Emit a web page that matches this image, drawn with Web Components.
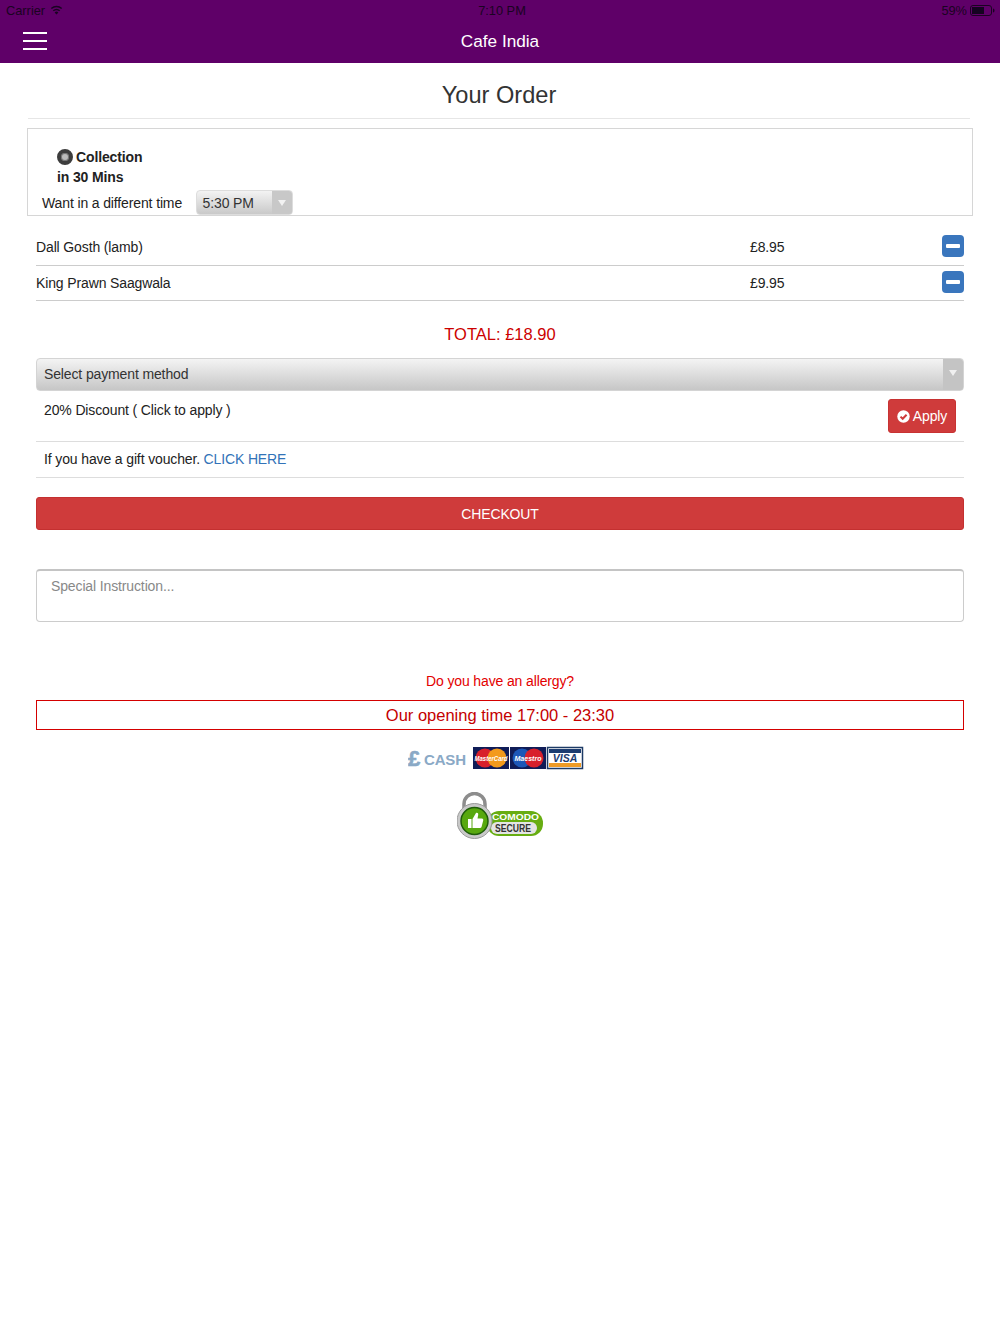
<!DOCTYPE html>
<html lang="en">
<head>
<meta charset="utf-8">
<title>Cafe India</title>
<style>
    html, body { margin: 0; background: #fff; }
    body { font-family: "Liberation Sans", Arial, sans-serif; font-size: 14px; letter-spacing: -.13px; color: #222; height: 1334px; overflow: hidden; }
    main { display: block; padding: 0 36px; }
</style>
</head>
<body>
<app-header title="Cafe India"></app-header>
<order-heading>Your Order</order-heading>
<order-type time="5:30 PM"></order-type>
<main>
    <order-line name="Dall Gosth (lamb)" price="£8.95"></order-line>
    <order-line name="King Prawn Saagwala" price="£9.95"></order-line>
    <order-total>TOTAL: £18.90</order-total>
    <payment-select>Select payment method</payment-select>
    <discount-row>20% Discount ( Click to apply )</discount-row>
    <voucher-row></voucher-row>
    <checkout-button>CHECKOUT</checkout-button>
    <special-note placeholder="Special Instruction..."></special-note>
    <allergy-link>Do you have an allergy?</allergy-link>
    <opening-time>Our opening time 17:00 - 23:30</opening-time>
    <pay-logos></pay-logos>
    <comodo-badge></comodo-badge>
</main>

<script>
// small helper so each class isn't the same 3 lines of shadow setup
class Base extends HTMLElement {
    constructor() {
        super();
        this.attachShadow({ mode: 'open' });
        this.shadowRoot.innerHTML = this.render();
    }
    render() { return ''; }
}

class AppHeader extends Base {
    render() {
        return `
        <style>
            :host { display: block; background: #5f0068; height: 63px; color: #fff; letter-spacing: 0; }
            .status { height: 20px; display: grid; grid-template-columns: 1fr auto 1fr; align-items: center; padding: 0 5px 0 6px; font-size: 12.8px; color: #1a0322; }
            .left { display: flex; align-items: center; gap: 5px; }
            .right { display: flex; align-items: center; justify-content: flex-end; gap: 3px; }
            .mid { margin-left: 3px; }
            .nav { height: 43px; display: grid; grid-template-columns: 1fr auto 1fr; align-items: center; padding: 0 23px; box-sizing: border-box; }
            .burger { display: flex; flex-direction: column; gap: 6px; width: 24px; margin-top: -2px; }
            .burger i { display: block; height: 2px; background: #fff; }
            .title { font-size: 17.2px; }
        </style>
        <div class="status">
            <div class="left">Carrier
                <svg width="13" height="10" viewBox="0 0 13 10"><path d="M6.5 9.6 4.6 7.4a2.8 2.8 0 0 1 3.8 0z" fill="#1a0322"/><path d="M3.3 5.800a4.900 4.900 0 0 1 6.400 0M1.300 3.500a8 8 0 0 1 10.400 0" fill="none" stroke="#1a0322" stroke-width="1.500"/></svg>
            </div>
            <div class="mid">7:10 PM</div>
            <div class="right">59%
                <svg width="25" height="11" viewBox="0 0 25 11"><rect x=".5" y=".5" width="21" height="10" rx="2.500" fill="none" stroke="#1a0322"/><rect x="2" y="2" width="12" height="7" fill="#150320"/><path d="M23 3.500c1 .3 1.500 1 1.500 2s-.5 1.700-1.500 2z" fill="#1a0322"/></svg>
            </div>
        </div>
        <div class="nav">
            <div class="burger"><i></i><i></i><i></i></div>
            <div class="title">${this.getAttribute('title')}</div>
        </div>`;
    }
}

class OrderHeading extends Base {
    render() {
        return `
        <style>
            :host { display: block; margin: 0 30px 9px 28px; height: 56px; box-sizing: border-box; border-bottom: 1px solid #e6e6e6; padding-top: 18px; text-align: center; font-size: 23.6px; letter-spacing: 0; line-height: 28px; color: #333; }
        </style>
        <slot></slot>`;
    }
}

class OrderType extends Base {
    render() {
        return `
        <style>
            :host { display: block; margin: 0 27px 14px; height: 88px; box-sizing: border-box; border: 1px solid #d6d6d6; padding: 18px 14px 0; color: #222; }
            .pick { padding-left: 15px; font-weight: bold; line-height: 20px; }
            .radio { display: flex; align-items: center; gap: 3px; }
            .dot { width: 16px; height: 16px; border-radius: 50%; box-sizing: border-box; border: 4px solid #3d3d3d; background: #bbb; box-shadow: inset 0 0 0 1px #777; }
            .want { display: flex; align-items: center; gap: 13.5px; margin-top: 3px; height: 25px; }
            .select { width: 97px; height: 25px; box-sizing: border-box; border: 1px solid #ddd; border-radius: 4px; background: linear-gradient(#f3f3f3, #c9c9c9); display: flex; align-items: center; padding-left: 6px; position: relative; color: #333; }
            .arrow { position: absolute; right: 0; top: 0; bottom: 0; width: 20px; background: #c8c8c8; border-radius: 0 3px 3px 0; display: flex; align-items: center; justify-content: center; }
            .arrow::after { content: ""; border: 4px solid transparent; border-top: 6px solid #f2f2f2; margin-top: 5px; }
        </style>
        <div class="pick">
            <div class="radio"><span class="dot"></span>Collection</div>
            <div>in 30 Mins</div>
        </div>
        <div class="want">
            <span>Want in a different time</span>
            <div class="select">${this.getAttribute('time')}<span class="arrow"></span></div>
        </div>`;
    }
}

class OrderLine extends Base {
    render() {
        return `
        <style>
            :host { display: grid; grid-template-columns: 1fr 214px; height: 35.5px; box-sizing: border-box; border-bottom: 1px solid #ccc; align-items: center; color: #222; }
            .btn { width: 22px; height: 22px; margin-top: -2px; border-radius: 4px; background: #3a76bd; display: flex; align-items: center; justify-content: center; }
            .btn i { display: block; width: 14px; height: 4px; background: #fff; border-radius: 1px; }
            .wrap { display: flex; justify-content: space-between; align-items: center; }
        </style>
        <span>${this.getAttribute('name')}</span>
        <div class="wrap"><span>${this.getAttribute('price')}</span><span class="btn"><i></i></span></div>`;
    }
}

class OrderTotal extends Base {
    render() {
        return `
        <style>
            :host { display: block; margin-top: 22px; height: 35px; line-height: 22px; text-align: center; font-size: 16.5px; letter-spacing: 0; color: #cc0000; }
        </style>
        <slot></slot>`;
    }
}

class PaymentSelect extends Base {
    render() {
        return `
        <style>
            :host { display: flex; align-items: center; height: 33px; box-sizing: border-box; border: 1px solid #d4d4d4; border-radius: 4px; padding: 0 0 2px 7px; background: linear-gradient(#f4f4f4, #c6c6c6); position: relative; color: #333; }
            .arrow { position: absolute; right: 0; top: 0; bottom: 0; width: 20px; background: #c4c4c4; border-radius: 0 3px 3px 0; display: flex; justify-content: center; align-items: center; }
            .arrow::after { content: ""; border: 4px solid transparent; border-top: 6px solid #f0f0f0; margin-top: 0; }
        </style>
        <slot></slot><span class="arrow"></span>`;
    }
}

class DiscountRow extends Base {
    render() {
        return `
        <style>
            :host { display: flex; justify-content: space-between; align-items: flex-start; height: 51px; box-sizing: border-box; border-bottom: 1px solid #ddd; padding: 8px 8px 0; color: #222; line-height: 20px; }
            button { all: unset; display: flex; align-items: center; gap: 3px; box-sizing: border-box; height: 34px; width: 68px; justify-content: center; background: #cf3b3b; border: 1px solid #c83232; border-radius: 3px; color: #fff; font: inherit; font-size: 14px; }
            .label { margin-top: 1px; }
        </style>
        <span class="label"><slot></slot></span>
        <button><svg width="13" height="13" viewBox="0 0 13 13"><circle cx="6.500" cy="6.500" r="6.200" fill="#fff"/><path d="M3.500 6.600 5.700 8.800 9.600 4.800" fill="none" stroke="#cf3b3b" stroke-width="2"/></svg>Apply</button>`;
    }
}

class VoucherRow extends Base {
    render() {
        return `
        <style>
            :host { display: flex; align-items: center; height: 36px; box-sizing: border-box; border-bottom: 1px solid #ddd; padding: 0 0 1px 8px; color: #222; }
            a { color: #3273b8; text-decoration: none; margin-left: 3.5px; }
        </style>
        If you have a gift voucher. <a href="#">CLICK HERE</a>`;
    }
}

class CheckoutButton extends Base {
    render() {
        return `
        <style>
            :host { display: flex; align-items: center; justify-content: center; margin-top: 19px; height: 33px; box-sizing: border-box; border: 1px solid #c43030; border-radius: 3px; background: #cf3b3b; color: #fff; }
        </style>
        <slot></slot>`;
    }
}

class SpecialNote extends Base {
    render() {
        return `
        <style>
            :host { display: block; margin-top: 39px; height: 53px; box-sizing: border-box; border: 1px solid #ccc; border-top: 2px solid #c4c4c4; border-radius: 4px; padding: 6px 14px; color: #888; line-height: 18px; }
        </style>
        ${this.getAttribute('placeholder')}`;
    }
}

class AllergyLink extends Base {
    render() {
        return `
        <style>
            :host { display: block; margin-top: 49px; height: 29px; line-height: 20px; text-align: center; color: #e30000; }
        </style>
        <slot></slot>`;
    }
}

class OpeningTime extends Base {
    render() {
        return `
        <style>
            :host { display: flex; align-items: center; justify-content: center; height: 30px; box-sizing: border-box; border: 1px solid #d40000; font-size: 16.5px; letter-spacing: 0; color: #c40000; }
        </style>
        <slot></slot>`;
    }
}

class PayLogos extends Base {
    render() {
        return `
        <style>
            :host { display: flex; justify-content: center; margin-top: 16px; height: 25px; letter-spacing: 0; }
            svg { display: block; margin-left: -7px; }
            text { font-family: "Liberation Sans", sans-serif; }
        </style>
        <svg width="178" height="25" viewBox="0 0 178 25">
            <text x="0" y="20" font-size="22" font-weight="bold" fill="#8aa9c6" stroke="#8aa9c6" stroke-width=".6">£</text>
            <text x="16" y="19" font-size="15" font-weight="bold" fill="#8aa9c6" textLength="42">CASH</text>
            <g>
                <rect x="65" y="1" width="36" height="22" fill="#101c57"/>
                <circle cx="77" cy="12" r="9.500" fill="#d8202c"/>
                <circle cx="89" cy="12" r="9.500" fill="#f39a1c"/>
                <text x="83" y="14.500" font-size="7" font-weight="bold" font-style="italic" fill="#fff" text-anchor="middle" textLength="33" lengthAdjust="spacingAndGlyphs">MasterCard</text>
            </g>
            <g>
                <rect x="102" y="1" width="36" height="22" fill="#101c57"/>
                <circle cx="114" cy="12" r="9.500" fill="#1c57b8"/>
                <circle cx="126" cy="12" r="9.500" fill="#d8202c"/>
                <text x="120" y="14.500" font-size="7" font-weight="bold" font-style="italic" fill="#fff" text-anchor="middle" textLength="27" lengthAdjust="spacingAndGlyphs">Maestro</text>
            </g>
            <g>
                <rect x="139.500" y="1.500" width="35" height="21" fill="#fff" stroke="#1d3b66" stroke-width="1.500"/>
                <rect x="141" y="3" width="32" height="4" fill="#1c3c70"/>
                <rect x="141" y="17" width="32" height="4" fill="#ee9b26"/>
                <text x="157" y="15.500" font-size="10.500" font-weight="bold" font-style="italic" fill="#1c3c70" text-anchor="middle">VISA</text>
            </g>
        </svg>`;
    }
}

class ComodoBadge extends Base {
    render() {
        return `
        <style>
            :host { display: flex; justify-content: center; margin-top: 21px; height: 50px; letter-spacing: 0; }
            svg { display: block; margin-left: 1px; }
            text { font-family: "Liberation Sans", sans-serif; font-weight: bold; }
        </style>
        <svg width="88" height="50" viewBox="0 0 88 50">
            <path d="M7 22V12a10.500 10.500 0 0 1 21 0v10" fill="none" stroke="#8d8d8d" stroke-width="3.500"/>
            <rect x="30" y="19" width="56" height="25" rx="12" fill="#67ad12"/>
            <rect x="34" y="30" width="46" height="12" rx="6" fill="#e4e4e4"/>
            <text x="35" y="27.500" font-size="9" fill="#fff" textLength="47" lengthAdjust="spacingAndGlyphs">COMODO</text>
            <text x="38" y="39.500" font-size="10.500" fill="#333" textLength="36" lengthAdjust="spacingAndGlyphs">SECURE</text>
            <circle cx="17.500" cy="29" r="17.500" fill="#c9c9c9" stroke="#9a9a9a"/>
            <circle cx="17.500" cy="29" r="13.500" fill="#58a80f" stroke="#1f5c0a" stroke-width="1.500"/>
            <path d="M11 27h3.500v9H11zM15.500 27l3.500-6c1.500-.5 2.500.5 2.200 2l-.7 3.500H25c1 0 1.500 1 1.200 2l-1.700 6.500c-.2.700-.7 1-1.500 1h-7.500z" fill="#fff"/>
        </svg>`;
    }
}

customElements.define('app-header', AppHeader);
customElements.define('order-heading', OrderHeading);
customElements.define('order-type', OrderType);
customElements.define('order-line', OrderLine);
customElements.define('order-total', OrderTotal);
customElements.define('payment-select', PaymentSelect);
customElements.define('discount-row', DiscountRow);
customElements.define('voucher-row', VoucherRow);
customElements.define('checkout-button', CheckoutButton);
customElements.define('special-note', SpecialNote);
customElements.define('allergy-link', AllergyLink);
customElements.define('opening-time', OpeningTime);
customElements.define('pay-logos', PayLogos);
customElements.define('comodo-badge', ComodoBadge);
</script>
</body>
</html>
